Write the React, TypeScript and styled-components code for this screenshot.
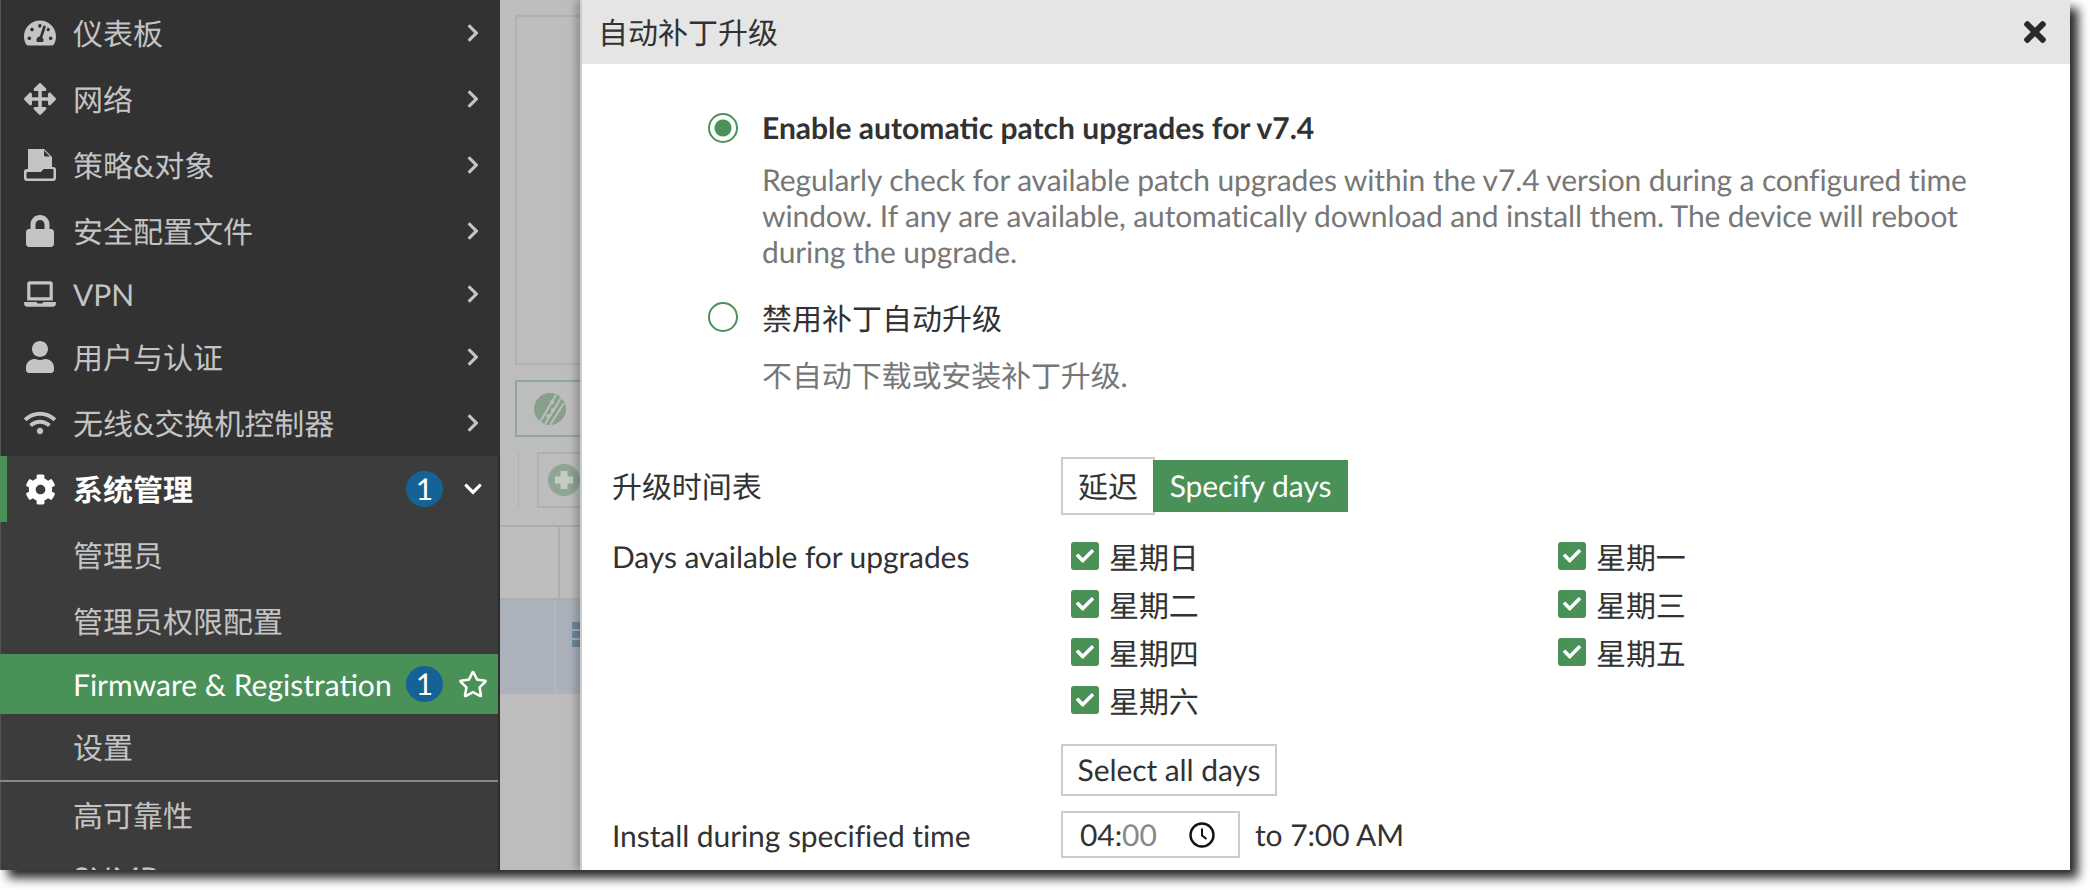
import React from "react";
import styled, { createGlobalStyle } from "styled-components";
import { FaCog, FaLock, FaUser, FaWifi, FaRegStar, FaChevronRight, FaChevronDown, FaTimes, FaCheck, FaArrowsAlt, FaTachometerAlt, FaLaptop } from "react-icons/fa";

const green = "#4a9158";
const font = `Lato, "Noto Sans CJK SC", sans-serif`;

const GlobalStyle = createGlobalStyle`
  html, body { margin: 0; padding: 0; background: #fff; }
  body {
    width: 2090px;
    height: 890px;
    overflow: hidden;
    font-family: ${font};
    text-rendering: geometricPrecision;
  }
`;

const PolicyIcon = () => (
  <svg width="32" height="32" viewBox="0 0 32 32" fill="currentColor">
    <path d="M4 0h16l8 8v10h1q3 0 3 3v8q0 3-3 3H3q-3 0-3-3v-6q0-3 3-3h1z" />
    <path d="M20 1.5l6 6h-4.5q-1.5 0-1.5-1.5z" fill="#323232" />
    <path d="M3.5 23H17l2.5-3h9q1 0 1 1v7.5q0 1-1 1h-25q-1 0-1-1V24q0-1 1-1z" fill="#323232" />
  </svg>
);

const ClockIcon = () => (
  <svg width="26" height="26" viewBox="0 0 26 26" fill="none" stroke="#111">
    <circle cx="13" cy="13" r="11.5" strokeWidth="2.4" />
    <path d="M13 6.5v7l4.5 3.5" strokeWidth="2" />
  </svg>
);

const ChipLogo = () => (
  <svg width="32" height="32" viewBox="0 0 32 32">
    <circle cx="16" cy="16" r="16" fill="#87a08c" />
    <g stroke="#bdbdbd" strokeWidth="2" fill="none">
      <path d="M6 29 22 2" />
      <path d="M11 31 27 5" />
      <path d="M16 32 30 10" />
    </g>
    <circle cx="18" cy="9" r="2" fill="#bdbdbd" />
    <circle cx="19" cy="17" r="2" fill="#bdbdbd" />
    <circle cx="14" cy="23" r="2" fill="#bdbdbd" />
  </svg>
);

const PlusCircle = () => (
  <svg width="32" height="32" viewBox="0 0 32 32">
    <circle cx="16" cy="16" r="16" fill="#8ea692" />
    <path d="M12.5 7h7v5.5H25v7h-5.5V25h-7v-5.5H7v-7h5.5z" fill="#c4cdc5" />
  </svg>
);

type NavEntry = { icon: React.ReactNode; label: string; latin?: boolean };

const topItems: NavEntry[] = [
  { icon: <FaTachometerAlt size={32} />, label: "仪表板" },
  { icon: <FaArrowsAlt size={32} />, label: "网络" },
  { icon: <PolicyIcon />, label: "策略&对象" },
  { icon: <FaLock size={32} />, label: "安全配置文件" },
  { icon: <FaLaptop size={32} />, label: "VPN", latin: true },
  { icon: <FaUser size={32} />, label: "用户与认证" },
  { icon: <FaWifi size={32} />, label: "无线&交换机控制器" },
];

const days = ["星期日", "星期一", "星期二", "星期三", "星期四", "星期五", "星期六"];

export default function App() {
  return (
    <>
      <GlobalStyle />
      <Frame>
        <Sidebar>
          <TopList>
            {topItems.map((item) => (
              <NavItem key={item.label} $latin={item.latin}>
                <NavIcon>{item.icon}</NavIcon>
                <NavLabel $latin={item.latin}>{item.label}</NavLabel>
                <TrailSlot><FaChevronRight size={20} /></TrailSlot>
              </NavItem>
            ))}
          </TopList>
          <LowerList>
            <GroupHead>
              <NavIcon><FaCog size={31} /></NavIcon>
              <NavLabel>系统管理</NavLabel>
              <Badge>1</Badge>
              <TrailSlot><FaChevronDown size={20} /></TrailSlot>
            </GroupHead>
            <SubItem>管理员</SubItem>
            <SubItem>管理员权限配置</SubItem>
            <ActiveItem>
              <NavLabel $latin>Firmware &amp; Registration</NavLabel>
              <Badge>1</Badge>
              <TrailSlot><FaRegStar size={30} /></TrailSlot>
            </ActiveItem>
            <SubItem>设置</SubItem>
            <Divider />
            <SubItem>高可靠性</SubItem>
            <SubItem $latin>SNMP</SubItem>
          </LowerList>
        </Sidebar>
        <Backdrop>
          <BackdropPanel />
          <BackdropChip><ChipLogo /></BackdropChip>
          <BackdropToolbar>
            <ToolbarSeparator />
            <ToolbarButton><PlusCircle /></ToolbarButton>
          </BackdropToolbar>
          <BackdropHeadRow><BackdropCell /></BackdropHeadRow>
          <BackdropRow>
            <BackdropRowCell />
            <RowGlyph><i /><i /><i /></RowGlyph>
          </BackdropRow>
        </Backdrop>
        <Modal>
          <ModalHeader>
            <ModalTitle>自动补丁升级</ModalTitle>
            <CloseIcon><FaTimes size={32} /></CloseIcon>
          </ModalHeader>
          <ModalBody>
            <RadioBlock>
              <Radio $checked />
              <RadioText>
                <RadioTitle $bold>Enable automatic patch upgrades for v7.4</RadioTitle>
                <RadioHint>
                  Regularly check for available patch upgrades within the v7.4 version during a configured time window. If any are available, automatically download and install them. The device will reboot during the upgrade.
                </RadioHint>
              </RadioText>
            </RadioBlock>
            <RadioBlock>
              <Radio />
              <RadioText>
                <RadioTitle>禁用补丁自动升级</RadioTitle>
                <RadioHint>不自动下载或安装补丁升级.</RadioHint>
              </RadioText>
            </RadioBlock>
            <FormGrid>
              <FieldLabel>升级时间表</FieldLabel>
              <Segmented>
                <SegmentOff>延迟</SegmentOff>
                <SegmentOn>Specify days</SegmentOn>
              </Segmented>
              <DaysLabel>Days available for upgrades</DaysLabel>
              <DaysCell>
                <DaysGrid>
                  {days.map((day) => (
                    <DayItem key={day}>
                      <CheckBox><FaCheck size={18} /></CheckBox>
                      {day}
                    </DayItem>
                  ))}
                </DaysGrid>
                <PlainButton>Select all days</PlainButton>
              </DaysCell>
              <TimeLabel>Install during specified time</TimeLabel>
              <TimeRow>
                <TimeInput>
                  <span>04:<TimeMuted>00</TimeMuted></span>
                  <ClockIcon />
                </TimeInput>
                <span>to 7:00 AM</span>
              </TimeRow>
            </FormGrid>
          </ModalBody>
        </Modal>
      </Frame>
    </>
  );
}

const Frame = styled.div`
  display: flex;
  width: 2070px;
  height: 870px;
  overflow: hidden;
  background: #bdbdbd;
  box-shadow: 8px 8px 10px rgba(0, 0, 0, 0.85);
`;

const Sidebar = styled.div`
  width: 500px;
  flex-shrink: 0;
  height: 870px;
  overflow: hidden;
  background: #3c3c3c;
`;

const TopList = styled.div`
  box-sizing: border-box;
  height: 456px;
  padding-right: 2px;
  background: #323232;
  box-shadow: inset 1px 0 0 #555;
`;

const LowerList = styled.div`
  box-sizing: border-box;
  height: 414px;
  background: #3c3c3c;
  border-right: 2px solid #2e2e2e;
  box-shadow: inset 1px 0 0 #555;
`;

const NavItem = styled.div<{ $latin?: boolean }>`
  display: flex;
  align-items: center;
  height: ${(p) => (p.$latin ? 60 : 66)}px;
  padding-left: 24px;
  color: #c4c4c4;
  font-size: 30px;
`;

const NavIcon = styled.span`
  display: inline-flex;
  justify-content: center;
  align-items: center;
  width: 32px;
  height: 32px;
  margin-right: 17px;
`;

const NavLabel = styled.span<{ $latin?: boolean }>`
  flex: 1;
  white-space: nowrap;
  padding: ${(p) => (p.$latin ? "2px 0 0" : "0 0 2px")};
`;

const TrailSlot = styled.span`
  display: inline-flex;
  justify-content: center;
  width: 46px;
  margin: 0 2px 0 7px;
`;

const GroupHead = styled.div`
  display: flex;
  align-items: center;
  height: 66px;
  padding-left: 17px;
  color: #fff;
  border-left: 7px solid ${green};
  font-size: 30px;
  font-weight: 700;
`;

const Badge = styled.span`
  display: inline-flex;
  justify-content: center;
  align-items: center;
  width: 37px;
  height: 36px;
  border-radius: 50%;
  background: #156297;
  color: #fff;
  font-size: 30px;
  font-weight: 400;
`;

const SubItem = styled.div<{ $latin?: boolean }>`
  display: flex;
  align-items: center;
  box-sizing: border-box;
  height: ${(p) => (p.$latin ? 60 : 66)}px;
  padding: 0 0 ${(p) => (p.$latin ? 0 : 2)}px 73px;
  color: #c4c4c4;
  font-size: 30px;
  white-space: nowrap;
`;

const ActiveItem = styled.div`
  display: flex;
  align-items: center;
  height: 60px;
  padding-left: 73px;
  background: ${green};
  color: #fff;
  font-size: 30px;
`;

const Divider = styled.div`
  height: 2px;
  background: #888;
`;

const Backdrop = styled.div`
  width: 80px;
  flex-shrink: 0;
  height: 870px;
  overflow: hidden;
  background: #bdbdbd;
`;

const BackdropPanel = styled.div`
  height: 346px;
  margin: 15px 0 0 15px;
  border: 2px solid #b0b0b0;
  border-right: 0;
`;

const BackdropChip = styled.div`
  display: flex;
  align-items: center;
  height: 53px;
  margin: 15px 0 0 15px;
  padding-left: 17px;
  border: 2px solid #93a893;
  border-right: 0;
`;

const BackdropToolbar = styled.div`
  display: flex;
  height: 56px;
  margin: 15px 0 0 18px;
`;

const ToolbarSeparator = styled.div`
  width: 2px;
  background: #b0b0b0;
  margin-right: 18px;
`;

const ToolbarButton = styled.div`
  flex: 1;
  display: flex;
  align-items: center;
  padding-left: 9px;
  border: 2px solid #b0b0b0;
  border-right: 0;
`;

const BackdropHeadRow = styled.div`
  box-sizing: border-box;
  height: 75px;
  margin-top: 17px;
  border-top: 2px solid #adadad;
  border-bottom: 2px solid #adadad;
`;

const BackdropCell = styled.div`
  box-sizing: border-box;
  width: 60px;
  height: 100%;
  border-right: 2px solid #adadad;
`;

const BackdropRow = styled.div`
  display: flex;
  box-sizing: border-box;
  height: 94px;
  background: #abb2bb;
  border-bottom: 2px solid #b2b2b2;
`;

const BackdropRowCell = styled.div`
  box-sizing: border-box;
  width: 60px;
  border-right: 2px solid #b3b8bf;
`;

const RowGlyph = styled.div`
  display: flex;
  flex-direction: column;
  gap: 2px;
  margin: 22px 0 0 16px;
  i {
    display: block;
    width: 8px;
    height: 7px;
    background: #6f8a9f;
  }
`;

const Modal = styled.div`
  flex: 1;
  min-width: 0;
  box-sizing: border-box;
  background: #fff;
  border-left: 2px solid #ccc;
  box-shadow: -4px 0 8px rgba(0, 0, 0, 0.25);
  color: #323232;
`;

const ModalHeader = styled.div`
  display: flex;
  justify-content: space-between;
  align-items: center;
  height: 64px;
  padding: 0 19px 0 16px;
  background: #e5e5e5;
`;

const ModalTitle = styled.span`
  font-size: 30px;
  padding-bottom: 2px;
`;

const CloseIcon = styled.span`
  display: inline-flex;
  color: #2a2a2a;
`;

const ModalBody = styled.div`
  padding: 46px 0 0 30px;
  font-size: 30px;
  letter-spacing: -0.08px;
`;

const RadioBlock = styled.div`
  display: flex;
  margin: 0 0 32px 96px;
`;

const Radio = styled.span<{ $checked?: boolean }>`
  width: 30px;
  height: 30px;
  flex-shrink: 0;
  box-sizing: border-box;
  margin: ${(p) => (p.$checked ? 3 : 0)}px 24px 0 0;
  border-radius: 50%;
  border: 2px solid ${green};
  background: ${(p) => (p.$checked ? `radial-gradient(circle, ${green} 0 8px, #fff 9px)` : "#fff")};
`;

const RadioText = styled.div`
  width: 1240px;
`;

const RadioTitle = styled.div<{ $bold?: boolean }>`
  font-weight: ${(p) => (p.$bold ? 700 : 400)};
  letter-spacing: 0;
  line-height: 36px;
  margin: ${(p) => (p.$bold ? 0 : -1)}px 0 ${(p) => (p.$bold ? 16 : 21)}px;
`;

const RadioHint = styled.div`
  color: #777;
  letter-spacing: -0.12px;
  line-height: 36px;
`;

const FormGrid = styled.div`
  display: grid;
  grid-template-columns: 449px 1fr;
  margin-top: 63px;
`;

const FieldLabel = styled.div`
  display: flex;
  align-items: center;
  padding-bottom: 2px;
`;

const DaysLabel = styled.div`
  margin-top: 24px;
  line-height: 36px;
`;

const TimeLabel = styled(FieldLabel)`
  margin-top: 15px;
  padding: 3px 0 0;
`;

const Segmented = styled.div`
  display: flex;
  align-items: center;
`;

const SegmentOff = styled.div`
  box-sizing: border-box;
  display: flex;
  justify-content: center;
  align-items: center;
  width: 94px;
  height: 58px;
  padding-bottom: 2px;
  border: 2px solid #ccc;
`;

const SegmentOn = styled.div`
  display: flex;
  justify-content: center;
  align-items: center;
  width: 195px;
  height: 52px;
  margin-left: -2px;
  background: ${green};
  color: #fff;
`;

const DaysCell = styled.div`
  margin-top: 24px;
`;

const DaysGrid = styled.div`
  display: grid;
  grid-template-columns: 487px 1fr;
  row-gap: 14px;
  padding-left: 10px;
`;

const DayItem = styled.div`
  display: flex;
  align-items: center;
  height: 34px;
  gap: 10px;
`;

const CheckBox = styled.span`
  display: inline-flex;
  justify-content: center;
  align-items: center;
  width: 28px;
  height: 28px;
  border-radius: 3px;
  background: ${green};
  color: #fff;
`;

const PlainButton = styled.div`
  box-sizing: border-box;
  display: inline-flex;
  justify-content: center;
  align-items: center;
  width: 216px;
  height: 52px;
  margin-top: 27px;
  border: 2px solid #ccc;
`;

const TimeRow = styled.div`
  display: flex;
  align-items: center;
  gap: 15px;
  margin-top: 15px;
`;

const TimeInput = styled.div`
  box-sizing: border-box;
  display: flex;
  justify-content: space-between;
  align-items: center;
  width: 179px;
  height: 47px;
  padding: 0 23px 0 17px;
  border: 2px solid #ccc;
`;

const TimeMuted = styled.span`
  color: #888;
`;
